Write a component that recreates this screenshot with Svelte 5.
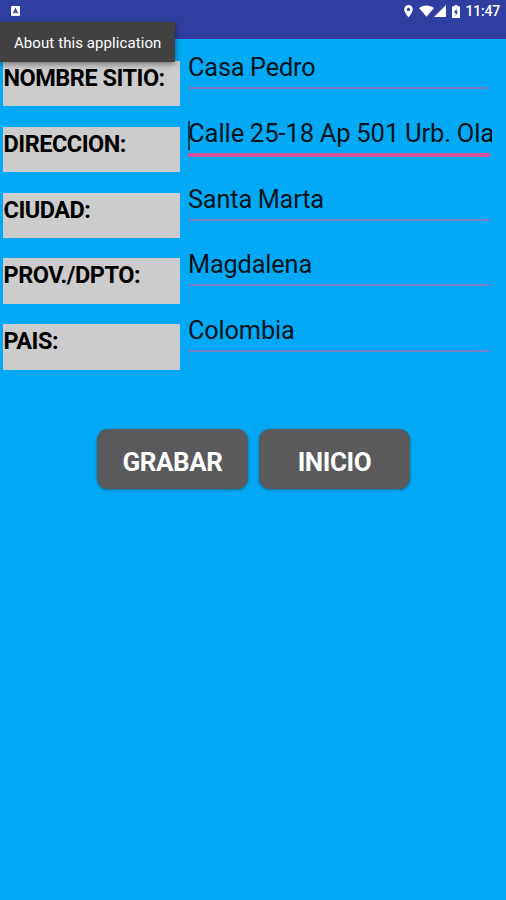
<script lang="ts">
  let fields = $state([
    {id: "nombre", label: "NOMBRE SITIO:", value: "Casa Pedro"},
    {id: "direccion", label: "DIRECCION:", value: "Calle 25-18 Ap 501 Urb. Olaya"},
    {id: "ciudad", label: "CIUDAD:", value: "Santa Marta"},
    {id: "provincia", label: "PROV./DPTO:", value: "Magdalena"},
    {id: "pais", label: "PAIS:", value: "Colombia"},
  ]);

  let active = $state("direccion");
</script>

<div class="screen">
  <header>
    <svg class="notification" width="9" height="10" viewBox="0 0 9 10">
      <rect width="9" height="10" rx="1" fill="#fff" />
      <path d="M2.6 7.2 4.5 3l1.9 4.2M3.3 6h2.4" fill="none" stroke="#303f9f" stroke-width="1.3" />
    </svg>
    <div class="status">
      <svg class="pin" width="9" height="13" viewBox="0 0 9 13">
        <path fill-rule="evenodd" d="M4.5 0A4.3 4.3 0 0 0 .2 4.3C.2 7.5 4.5 12.5 4.5 12.5S8.8 7.5 8.8 4.3A4.3 4.3 0 0 0 4.5 0Zm0 2.8a1.6 1.6 0 1 1 0 3.2 1.6 1.6 0 0 1 0-3.2Z" />
      </svg>
      <svg class="wifi" width="15" height="12" viewBox="0 0 16 12">
        <path d="M0 2.8C4.6-.8 11.4-.8 16 2.8L8 12Z" />
      </svg>
      <svg class="signal" width="12" height="12" viewBox="0 0 12 12">
        <path d="M12 0v12H0Z" />
      </svg>
      <svg class="battery" width="8" height="13" viewBox="0 0 8 13">
        <path fill-rule="evenodd" d="M2.5 0h3v1.3h1.7q.8 0 .8.8v10.1q0 .8-.8.8H.8q-.8 0-.8-.8V2.1q0-.8.8-.8h1.7ZM4.6 3.2 2 7.7h1.6v3.2L6 6.5H4.6Z" />
      </svg>
      <span>11:47</span>
    </div>
    <div class="tooltip">About this application</div>
  </header>

  <main>
    {#each fields as field (field.id)}
      <div class="row" class:active={active === field.id}>
        <label for={field.id}>{field.label}</label>
        <div class="field">
          <input id={field.id} bind:value={field.value} onfocus={() => active = field.id} />
        </div>
      </div>
    {/each}

    <div class="actions">
      <button type="button">GRABAR</button>
      <button type="button">INICIO</button>
    </div>
  </main>
</div>

<style>
  :global(body) {margin: 0}

  .screen {
    height: 900px;
    overflow: hidden;
    background: #03a9f4;
    color: #000;
    font-family: Roboto, sans-serif;
  }

  header {
    position: relative;
    display: flex;
    justify-content: space-between;
    box-sizing: border-box;
    height: 39px;
    padding: 0 6px 0 11px;
    background: #303f9f;
  }
  .notification {margin-top: 6px}

  .status {
    display: flex;
    align-items: center;
    height: 22px;
    color: #fff;
    font-size: 14px;
    font-weight: 500;
    letter-spacing: -0.2px;
  }
  .status svg {fill: currentColor}
  .pin {margin-right: 1px}
  .wifi {margin-left: 5px}
  .battery {margin: 0 5px 0 6px}

  .tooltip {
    position: absolute;
    z-index: 1;
    top: 22px;
    left: 0;
    box-sizing: border-box;
    width: 175px;
    height: 40px;
    padding-left: 14px;
    background: #424242;
    box-shadow: 0 2px 6px rgba(0, 0, 0, 0.45);
    color: #fff;
    font-size: 15px;
    letter-spacing: 0.08px;
    line-height: 43px;
    white-space: nowrap;
  }

  .row {
    display: flex;
    height: 65.9px;
  }
  label {
    box-sizing: border-box;
    width: 177px;
    height: 45.4px;
    margin: 21.8px 0 0 3px;
    padding-left: 0.5px;
    background: #ccc;
    font-size: 23.5px;
    font-weight: 700;
    letter-spacing: -0.5px;
    line-height: 35.6px;
    white-space: nowrap;
  }
  .field {
    position: relative;
    width: 304px;
    height: 50px;
    margin-left: 8px;
  }
  .field::after {
    content: "";
    position: absolute;
    left: 0;
    right: 2px;
    top: 47.8px;
    height: 2px;
    background: #7a80c6;
  }
  .active .field::after {
    height: 4px;
    background: #d4559d;
  }
  .active .field::before {
    content: "";
    position: absolute;
    left: 0;
    top: 16px;
    width: 1.5px;
    height: 29px;
    background: #07384e;
  }
  input {
    display: block;
    width: 100%;
    height: 30px;
    margin: 13.3px 0 0;
    padding: 0;
    border: 0;
    outline: 0;
    background: none;
    color: #03141c;
    font: 25.3px Roboto, sans-serif;
    letter-spacing: -0.15px;
    word-spacing: -0.5px;
  }
  .active input {
    font-size: 25.6px;
    letter-spacing: -0.1px;
  }

  .actions {
    display: flex;
    gap: 11px;
    margin: 60.5px 0 0 97px;
  }
  button {
    width: 151px;
    height: 60px;
    padding: 7px 0 0;
    border: 0;
    border-radius: 11px;
    background: #5a595b;
    box-shadow: 0 1px 3px rgba(0, 0, 0, 0.4);
    color: #fff;
    font: 700 26px Roboto, sans-serif;
    letter-spacing: -0.4px;
  }
</style>
